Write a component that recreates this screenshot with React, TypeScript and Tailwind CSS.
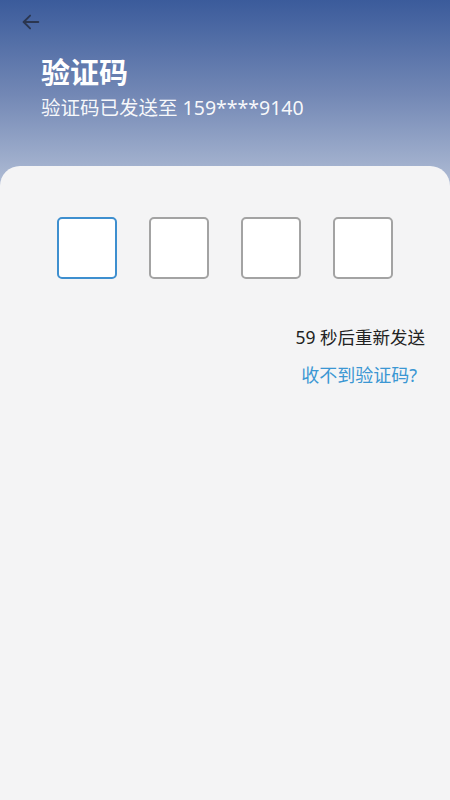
import { useState } from 'react'

export default function App() {
  const [code] = useState(['', '', '', ''])

  return (
    <div
      className="relative h-[800px] w-[450px] overflow-hidden bg-[#f4f4f5]"
      style={{ fontFamily: '"Noto Sans", "Noto Sans CJK SC", sans-serif' }}
    >
      {/* Header */}
      <div className="h-[190px] bg-gradient-to-b from-[#3b5b9b] via-[#7388b5] to-[#b3bfd6] px-[41px] pt-[8px]">
        <button className="-ml-[24px] flex h-[28px] w-[28px] items-center justify-center text-[#2b3650]">
          <svg width="22" height="22" viewBox="0 0 24 24" fill="none" stroke="currentColor" strokeWidth="2" strokeLinecap="round" strokeLinejoin="round">
            <path d="M20 12H4" />
            <path d="M11 5l-7 7 7 7" />
          </svg>
        </button>
        <h1 className="mt-[18px] text-[29px] font-bold leading-[38px] text-white">验证码</h1>
        <p className="mt-[2px] text-[19.5px] leading-[28px] text-white/95">验证码已发送至 159****9140</p>
      </div>

      {/* Card */}
      <div className="-mt-[24px] rounded-t-[20px] bg-[#f4f4f5] pt-[51px]">
        <div className="flex justify-center gap-[32px]">
          {code.map((c, i) => (
            <div
              key={i}
              className={`h-[62px] w-[60px] rounded-[5px] border-[2px] bg-white ${
                i === 0 ? 'border-[#3e8fcf]' : 'border-[#a3a3a3]'
              }`}
            >
              {c}
            </div>
          ))}
        </div>

        <div className="mt-[45px] flex flex-col items-end pr-[25px]">
          <span className="text-[17.5px] leading-[26px] text-[#222]">59 秒后重新发送</span>
          <span className="mr-[8px] mt-[12px] text-[18px] leading-[26px] text-[#3b97d3]">收不到验证码?</span>
        </div>
      </div>
    </div>
  )
}
